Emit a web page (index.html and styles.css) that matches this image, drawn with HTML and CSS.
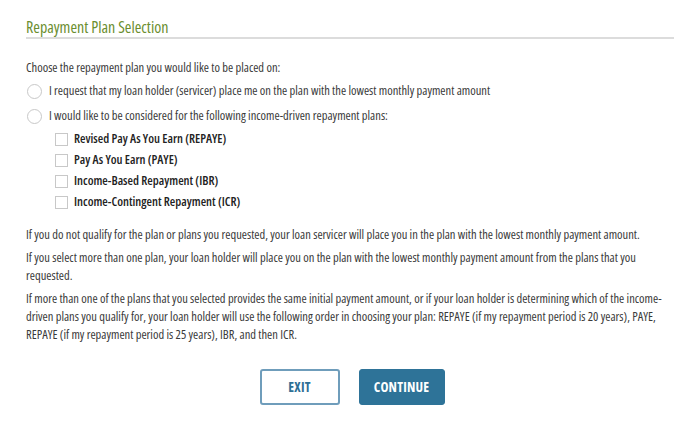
FILE: index.html
```html
<!DOCTYPE html>
<html lang="en">
<head>
  <meta charset="UTF-8">
  <meta name="viewport" content="width=device-width, initial-scale=1.0">
  <title>Repayment Plan Selection</title>
  <link rel="stylesheet" href="styles.css">
</head>
<body>
  <div class="container">
    <h2 class="section-title">Repayment Plan Selection</h2>

    <p class="intro">Choose the repayment plan you would like to be placed on:</p>

    <!-- Plan choice -->
    <label class="radio-row">
      <input type="radio" name="plan" value="lowest">
      <span class="radio-mark"></span>
      I request that my loan holder (servicer) place me on the plan with the lowest monthly payment amount
    </label>
    <label class="radio-row">
      <input type="radio" name="plan" value="idr">
      <span class="radio-mark"></span>
      I would like to be considered for the following income-driven repayment plans:
    </label>

    <div class="plan-list">
      <label class="check-row">
        <input type="checkbox" value="REPAYE">
        <span class="check-mark"></span>
        Revised Pay As You Earn (REPAYE)
      </label>
      <label class="check-row">
        <input type="checkbox" value="PAYE">
        <span class="check-mark"></span>
        Pay As You Earn (PAYE)
      </label>
      <label class="check-row">
        <input type="checkbox" value="IBR">
        <span class="check-mark"></span>
        Income-Based Repayment (IBR)
      </label>
      <label class="check-row">
        <input type="checkbox" value="ICR">
        <span class="check-mark"></span>
        Income-Contingent Repayment (ICR)
      </label>
    </div>

    <!-- Notes -->
    <div class="notes">
      <p>If you do not qualify for the plan or plans you requested, your loan servicer will place you in the plan with the lowest monthly payment amount.</p>
      <p>If you select more than one plan, your loan holder will place you on the plan with the lowest monthly payment amount from the plans that you requested.</p>
      <p>If more than one of the plans that you selected provides the same initial payment amount, or if your loan holder is determining which of the income-driven plans you qualify for, your loan holder will use the following order in choosing your plan: REPAYE (if my repayment period is 20 years), PAYE, REPAYE (if my repayment period is 25 years), IBR, and then ICR.</p>
    </div>

    <!-- Actions -->
    <div class="actions">
      <button type="button" class="btn btn-outline">EXIT</button>
      <button type="button" class="btn btn-primary">CONTINUE</button>
    </div>
  </div>
</body>
</html>
```

FILE: styles.css
```css
body {
  margin: 0;
  font-family: "Open Sans", "DejaVu Sans Condensed", sans-serif;
  font-stretch: 78%;
  color: #3a3a3a;
  background: #fff;
}
.container {
  padding: 18px 26px 0;
}
.section-title {
  margin: 0 0 20px;
  font-size: 16px;
  font-stretch: 78%;
  font-weight: normal;
  line-height: 19px;
  color: #6b8e2f;
  border-bottom: 2px solid #dcdcdc;
}
.intro {
  margin: 0 0 5px;
  font-size: 12.5px;
  line-height: 18px;
}
.radio-row,
.check-row {
  display: flex;
  align-items: center;
  font-size: 12.5px;
  line-height: 18px;
}
.radio-row {
  margin-bottom: 7px;
}
.radio-row input,
.check-row input {
  display: none;
}
.radio-mark {
  width: 13px;
  height: 13px;
  margin: 0 7px 0 1px;
  border: 1px solid #c8c8c8;
  border-radius: 50%;
}
.plan-list {
  padding-left: 29px;
  margin-top: -2px;
}
.check-row {
  margin-bottom: 3px;
  color: #222;
  font-weight: 600;
}
.check-mark {
  width: 11px;
  height: 11px;
  margin-right: 6px;
  border: 1px solid #c8c8c8;
}
.notes {
  margin-top: 15px;
}
.notes p {
  margin: 0 0 5px;
  font-size: 12.5px;
  line-height: 18px;
}
.actions {
  display: flex;
  justify-content: center;
  gap: 19px;
  margin-top: 25px;
  padding-left: 4px;
}
.btn {
  height: 36px;
  padding: 0;
  border-radius: 3px;
  font-family: inherit;
  font-stretch: 78%;
  font-size: 13.5px;
  font-weight: bold;
  letter-spacing: 0.2px;
  cursor: pointer;
}
.btn-outline {
  width: 80px;
  background: #fff;
  color: #2e6f95;
  border: 2px solid #6f9dbb;
}
.btn-primary {
  width: 86px;
  background: #2e7398;
  color: #fff;
  border: 1px solid #2e7398;
}
```
